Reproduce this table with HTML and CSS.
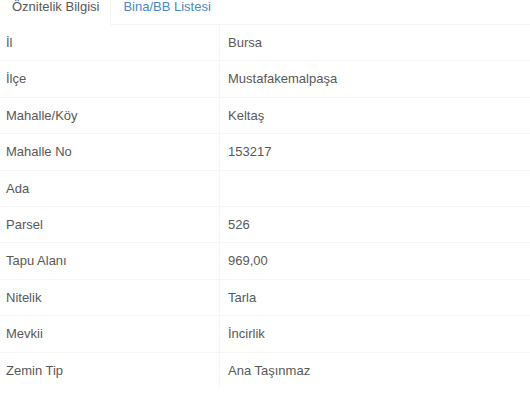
FILE: index.html
```html
<!DOCTYPE html>
<html lang="tr">
<head>
<meta charset="utf-8">
<link rel="stylesheet" href="styles.css">
</head>
<body>
<div class="panel">
  <ul class="tabs">
    <li class="tab active">Öznitelik Bilgisi</li>
    <li class="tab link">Bina/BB Listesi</li>
  </ul>
  <table class="attrs">
    <tr><td class="label">İl</td><td class="value">Bursa</td></tr>
    <tr><td class="label">İlçe</td><td class="value">Mustafakemalpaşa</td></tr>
    <tr><td class="label">Mahalle/Köy</td><td class="value">Keltaş</td></tr>
    <tr><td class="label">Mahalle No</td><td class="value">153217</td></tr>
    <tr><td class="label">Ada</td><td class="value"></td></tr>
    <tr><td class="label">Parsel</td><td class="value">526</td></tr>
    <tr><td class="label">Tapu Alanı</td><td class="value">969,00</td></tr>
    <tr><td class="label">Nitelik</td><td class="value">Tarla</td></tr>
    <tr><td class="label">Mevkii</td><td class="value">İncirlik</td></tr>
    <tr><td class="label">Zemin Tip</td><td class="value">Ana Taşınmaz</td></tr>
  </table>
</div>
</body>
</html>
```
FILE: styles.css
```css
html, body {
  margin: 0;
  padding: 0;
  background: #fff;
  overflow: hidden;
}
body {
  font-family: "Liberation Sans", Arial, sans-serif;
  font-size: 13px;
  color: #585858;
}
.panel {
  margin-top: -2px;
}
.tabs {
  list-style: none;
  margin: 0;
  padding: 0;
  display: flex;
  border-bottom: 1px solid #f4f4f4;
}
.tab {
  padding: 0 11px 8px 11px;
  line-height: 18px;
  margin-bottom: -1px;
  border: 1px solid transparent;
  border-top: 0;
}
.tab.active {
  background: #fff;
  border-right-color: #f4f4f4;
  border-bottom-color: #fff;
  border-left: 0;
  padding-left: 12px;
  color: #585858;
}
.tab.link {
  color: #4a88c2;
}
.attrs {
  border-collapse: collapse;
  width: 100%;
}
.attrs td {
  border-top: 1px solid #f5f5f5;
  padding: 8px 8px;
  line-height: 19.4px;
  vertical-align: top;
}
.attrs tr:first-child td {
  border-top: 0;
}
.attrs .label {
  width: 205px;
  padding-left: 6px;
  border-right: 1px solid #f5f5f5;
}
```
